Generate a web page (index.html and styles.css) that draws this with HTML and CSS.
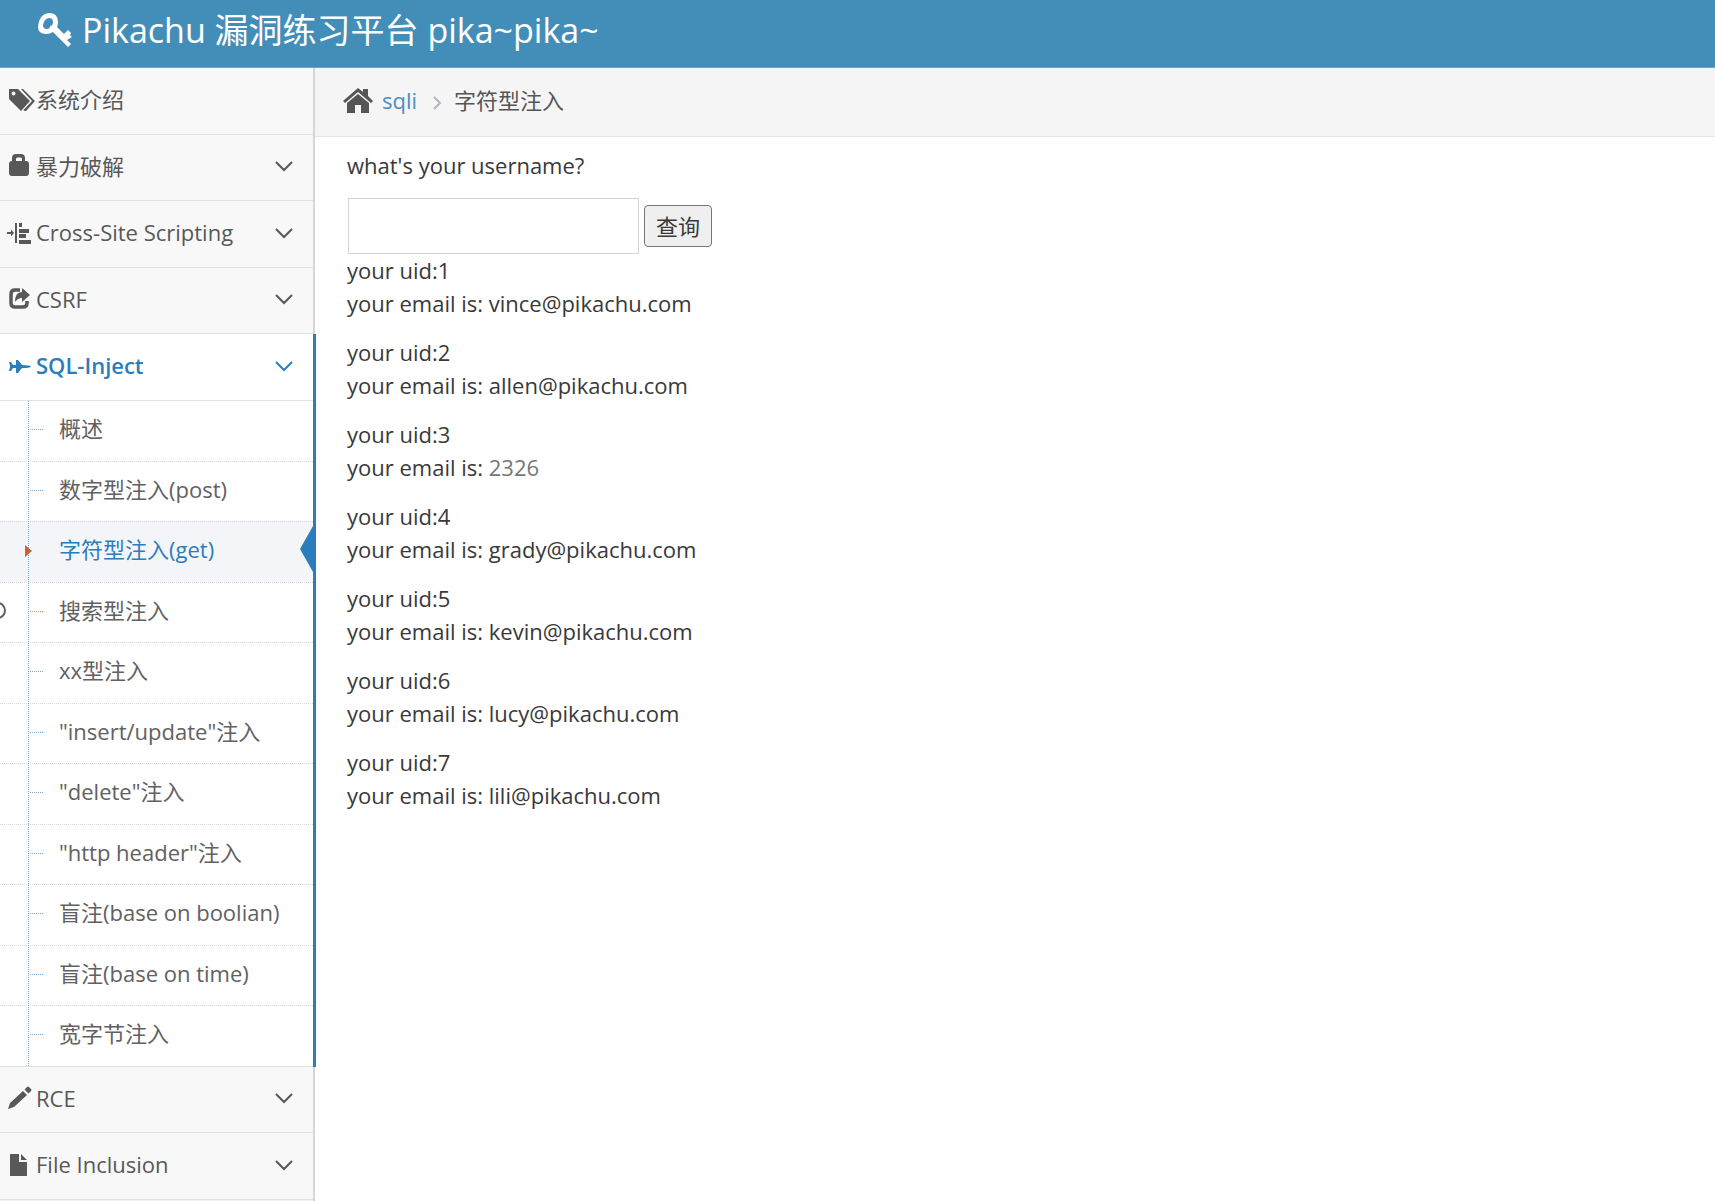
FILE: index.html
```html
<!DOCTYPE html>
<html lang="zh">
<head>
	<meta charset="utf-8">
	<title>Get the pikachu</title>
	<link rel="stylesheet" href="styles.css">
</head>
<body>
	<header class="navbar">
		<a href="#" class="navbar-brand">
			<svg class="key" viewBox="0 0 34 34"><path fill-rule="evenodd" d="M11 0Q20 0 20 9q0 3-1 5l7 7 4-4 3 3-1 2 2 2-5 3 4 4-3 3L15 19q-3 2-7 2-8 0-8-7Q1 1 11 0zM11 5q-5 1-6 7 0 4 4 4 3 0 3-3 3 0 3-4 0-4-4-4z"/></svg>
			Pikachu 漏洞练习平台 pika~pika~
		</a>
	</header>

	<div class="main-container">
		<nav class="sidebar">
			<ul class="nav-list">
				<li>
					<a href="#">
						<svg class="menu-icon" viewBox="0 0 27 24"><path fill-rule="evenodd" d="M0 1h9l12 12-9 10L0 11zM4.500 3.500a2 2 0 1 0 0 4 2 2 0 0 0 0-4z"/><path d="M12 1h2l12 12-9 10h-1.500l-1-1 8.500-9z"/></svg>
						<span class="menu-text">系统介绍</span>
					</a>
				</li>
				<li>
					<a href="#">
						<svg class="menu-icon" viewBox="0 0 27 24"><path fill-rule="evenodd" d="M3 7V4q0-4 4-4h5q4 0 4 4v3h1q3 0 3 3v9q0 3-3 3H3q-3 0-3-3v-9q0-3 3-3zM7 7h6V5q0-1.500-1.500-1.500h-3Q7 3.500 7 5z"/></svg>
						<span class="menu-text">暴力破解</span>
						<svg class="arrow" viewBox="0 0 18 12"><path d="M1 2l8 8 8-8"/></svg>
					</a>
				</li>
				<li>
					<a href="#">
						<svg class="menu-icon" viewBox="0 0 27 24"><path d="M-2 11h4V8.500l3 3.500-3 3.500V13h-4zM6 2h2v20H6zM10 2h3v4h-3zM10 8h10v4H10zM10 13h7v4h-7zM10 19h12v4H10z"/></svg>
						<span class="menu-text">Cross-Site Scripting</span>
						<svg class="arrow" viewBox="0 0 18 12"><path d="M1 2l8 8 8-8"/></svg>
					</a>
				</li>
				<li>
					<a href="#">
						<svg class="menu-icon" viewBox="0 0 27 24"><path d="M11 3H6Q2 3 2 7v9q0 4 4 4h8q4 0 4-4v-2" fill="none" stroke="currentColor" stroke-width="3.500"/><path d="M13 1l8 7-8 7v-4q-4 0-7 4 0-10 7-10z"/></svg>
						<span class="menu-text">CSRF</span>
						<svg class="arrow" viewBox="0 0 18 12"><path d="M1 2l8 8 8-8"/></svg>
					</a>
				</li>
				<li class="open">
					<a href="#">
						<svg class="menu-icon" viewBox="0 0 27 24"><path d="M0 8h2l2 3h3V6h2l4 5q8 0 9 1.500-1 1.500-9 1.500l-4 5H7v-5H4l-2 3H0l1-3.500V11z"/></svg>
						<span class="menu-text">SQL-Inject</span>
						<svg class="arrow" viewBox="0 0 18 12"><path d="M1 2l8 8 8-8"/></svg>
					</a>
					<ul class="submenu">
						<li><a href="#">概述</a></li>
						<li><a href="#">数字型注入(post)</a></li>
						<li class="active"><a href="#">字符型注入(get)</a></li>
						<li class="leaf"><a href="#">搜索型注入</a></li>
						<li><a href="#">xx型注入</a></li>
						<li><a href="#">"insert/update"注入</a></li>
						<li><a href="#">"delete"注入</a></li>
						<li><a href="#">"http header"注入</a></li>
						<li><a href="#">盲注(base on boolian)</a></li>
						<li><a href="#">盲注(base on time)</a></li>
						<li><a href="#">宽字节注入</a></li>
					</ul>
				</li>
				<li>
					<a href="#">
						<svg class="menu-icon" viewBox="0 0 27 24"><path d="M-1 23l2-6L14 5l4 4L5 21zM15.500 3.500L18 1q1-1 2 0l2 2q1 1 0 2l-2.500 2.500z"/></svg>
						<span class="menu-text">RCE</span>
						<svg class="arrow" viewBox="0 0 18 12"><path d="M1 2l8 8 8-8"/></svg>
					</a>
				</li>
				<li>
					<a href="#">
						<svg class="menu-icon" viewBox="0 0 27 24"><path d="M1 1h9v8h8v14H1zM12 1l6 6h-6z"/></svg>
						<span class="menu-text">File Inclusion</span>
						<svg class="arrow" viewBox="0 0 18 12"><path d="M1 2l8 8 8-8"/></svg>
					</a>
				</li>
			</ul>
		</nav>

		<main class="main-content">
			<div class="breadcrumbs">
				<svg class="home" viewBox="0 0 30 26"><path d="M4 15l11-9 11 9v10h-8v-8h-6v8H4z"/><path d="M15 0l5 4V1h5v7l5 5-2 2L15 4 2 15l-2-2z"/></svg>
				<a href="#">sqli</a>
				<svg class="sep" viewBox="0 0 10 14"><path d="M2 1l6 6-6 6"/></svg>
				<span>字符型注入</span>
			</div>
			<div class="page-content">
				<form>
					<label for="name">what's your username?</label>
					<div class="row">
						<input type="text" id="name" name="name">
						<button type="button">查询</button>
					</div>
				</form>
				<p class="notice">your uid:1<br>your email is: vince@pikachu.com</p>
				<p class="notice">your uid:2<br>your email is: allen@pikachu.com</p>
				<p class="notice">your uid:3<br>your email is: <span class="num">2326</span></p>
				<p class="notice">your uid:4<br>your email is: grady@pikachu.com</p>
				<p class="notice">your uid:5<br>your email is: kevin@pikachu.com</p>
				<p class="notice">your uid:6<br>your email is: lucy@pikachu.com</p>
				<p class="notice">your uid:7<br>your email is: lili@pikachu.com</p>
			</div>
		</main>
	</div>
</body>
</html>
```
FILE: styles.css
```css
*, *::before, *::after{
	box-sizing: border-box;
	margin: 0;
	padding: 0;
}
body{
	font-family: "Open Sans", "Noto Sans CJK SC", sans-serif;
	font-size: 22px;
	line-height: 33px;
	color: #393939;
	background: #fff;
}
ul{
	list-style: none;
}
a{
	text-decoration: none;
}
svg{
	flex: none;
	fill: currentColor;
}

.navbar{
	height: 68px;
	padding: 0 38px;
	background: #438eb9;
	border-bottom: 1px solid #6aa3c8;
}
.navbar-brand{
	display: flex;
	align-items: center;
	gap: 10px;
	height: 60px;
	font-size: 34px;
	color: #fff;
	white-space: nowrap;
}
.key{
	width: 34px;
	height: 34px;
}

.main-container{
	display: flex;
	min-height: calc(100vh - 68px);
}

/* sidebar */
.sidebar{
	flex: none;
	width: 315px;
	background: #f2f2f2;
	border-right: 2px solid #d6d6d6;
}
.nav-list > li{
	background: #f8f8f8;
	border-bottom: 1px solid #e2e2e2;
}
.nav-list > li > a{
	display: flex;
	align-items: center;
	height: 65px;
	padding: 0 20px 3px 9px;
	color: #585858;
}
.nav-list > li:nth-child(odd) > a{
	height: 66px;
}
.menu-icon{
	width: 27px;
	height: 24px;
	overflow: visible;
}
.menu-text{
	flex: 1;
}
.arrow{
	width: 18px;
	height: 12px;
	fill: none;
	stroke: currentColor;
	stroke-width: 2;
}
.nav-list > .open{
	position: relative;
	margin-right: -3px;
	padding-right: 3px;
	background: #fff;
	border-bottom: 0;
}
.nav-list > .open::after{
	content: "";
	position: absolute;
	top: 0;
	right: 0;
	bottom: 0;
	width: 3px;
	background: #2b7dbc;
}
.nav-list > .open > a{
	color: #2b7dbc;
	font-weight: 600;
}

.submenu{
	position: relative;
	border-top: 1px solid #e2e2e2;
	border-bottom: 1px solid #e2e2e2;
}
.submenu::before{
	content: "";
	position: absolute;
	z-index: 1;
	top: 0;
	bottom: 0;
	left: 28px;
	border-left: 1px dotted #7fa8c8;
}
.submenu li{
	position: relative;
	border-top: 1px dotted #d8d8d8;
}
.submenu li:first-child{
	border-top: 0;
}
.submenu li::before{
	content: "";
	position: absolute;
	top: 28px;
	left: 30px;
	width: 13px;
	border-top: 1px dotted #7fa8c8;
}
.submenu a{
	display: block;
	height: 60px;
	padding: 11px 0 0 59px;
	color: #616161;
}
.submenu li:nth-child(even) a{
	height: 59px;
}
.submenu .active{
	background: #f3f5f9;
}
.submenu .active a{
	color: #2b7dbc;
}
/* red caret over the tree line */
.submenu .active::before{
	z-index: 2;
	top: 23px;
	left: 25px;
	width: 7px;
	height: 12px;
	border: solid transparent;
	border-width: 6px 0 6px 7px;
	border-left-color: #c86139;
}
.submenu .active::after{
	content: "";
	position: absolute;
	top: 4px;
	right: 0;
	border: solid transparent;
	border-width: 23px 13px 23px 0;
	border-right-color: #2b7dbc;
}
.leaf::after{
	content: "";
	position: absolute;
	top: 19px;
	left: -11px;
	width: 17px;
	height: 17px;
	border: 2px solid #616161;
	border-radius: 50%;
}

/* content */
.main-content{
	flex: 1;
	min-width: 0;
}
.breadcrumbs{
	display: flex;
	align-items: center;
	height: 69px;
	padding: 0 28px 3px;
	background: #f5f5f5;
	border-bottom: 1px solid #e5e5e5;
	color: #555;
}
.breadcrumbs a{
	margin-left: 9px;
	color: #4c8fbd;
}
.home{
	width: 30px;
	height: 26px;
}
.sep{
	width: 10px;
	height: 14px;
	margin: 4px 12px 0 15px;
	fill: none;
	stroke: #b2b6bf;
	stroke-width: 2;
}
.page-content{
	padding: 12px 32px;
}
label{
	display: block;
	margin-bottom: 16px;
}
.row{
	display: flex;
	align-items: center;
	gap: 5px;
	padding-left: 1px;
}
input{
	width: 291px;
	height: 56px;
	padding: 8px;
	font: inherit;
	color: #858585;
	border: 1px solid #d5d5d5;
}
button{
	width: 68px;
	height: 42px;
	font: inherit;
	color: #393939;
	background: #efefef;
	border: 1px solid #767676;
	border-radius: 4px;
}
.notice{
	margin-bottom: 16px;
}
.num{
	color: #777;
}
```
